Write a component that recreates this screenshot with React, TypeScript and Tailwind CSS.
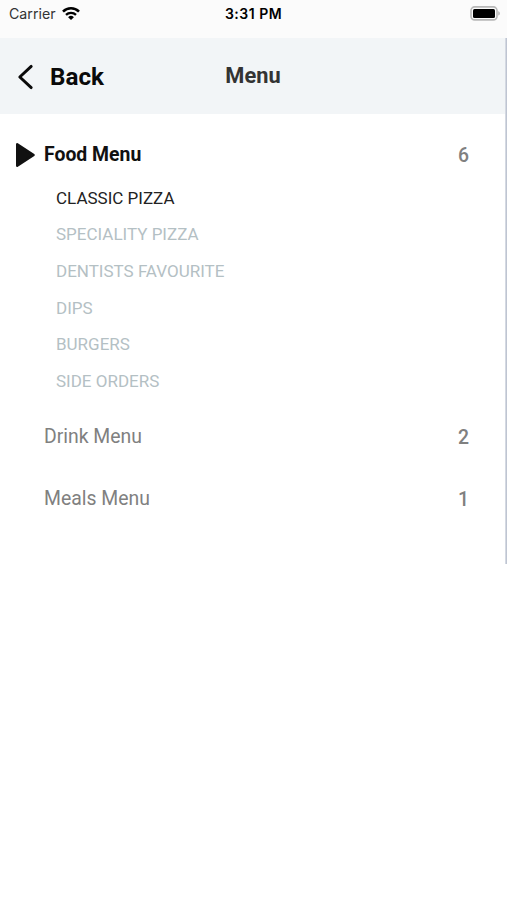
interface MenuCategory {
  id: string;
  title: string;
  count: number;
  items: string[];
}

const categories: MenuCategory[] = [
  {
    id: "food",
    title: "Food Menu",
    count: 6,
    items: [
      "Classic Pizza",
      "Speciality Pizza",
      "Dentists Favourite",
      "Dips",
      "Burgers",
      "Side Orders",
    ],
  },
  { id: "drink", title: "Drink Menu", count: 2, items: [] },
  { id: "meals", title: "Meals Menu", count: 1, items: [] },
];

function StatusBar() {
  return (
    <div className="grid h-[38px] grid-cols-3 items-start bg-[#fbfbfb] pt-[5px] pl-[7px] pr-[7px] font-['Inter',sans-serif] text-black">
      <div className="flex items-center gap-[6px] pl-[2px]">
        <span className="text-[14.2px] leading-[18px] text-[#333]">
          Carrier
        </span>
        <svg width="18" height="14" viewBox="0 0 18 14" fill="none">
          <path d="M1 4.6a11.4 11.4 0 0 1 16 0" stroke="#000" strokeWidth="2.6" />
          <path d="M4 7.9a7.1 7.1 0 0 1 10 0" stroke="#000" strokeWidth="2.3" />
          <path d="M9 13.1 6.1 10.2a4.1 4.1 0 0 1 5.8 0Z" fill="#000" />
        </svg>
      </div>
      <span className="text-center text-[14px] leading-[18px] font-semibold tracking-[0.5px]">
        3:31 PM
      </span>
      <svg
        className="mt-px justify-self-end"
        width="30"
        height="15"
        viewBox="0 0 30 15"
      >
        <rect x="1" y="0.9" width="26" height="13" rx="3.6" fill="#fbfbfb" stroke="#b8b8b8" strokeWidth="1.6" />
        <rect x="3" y="3" width="22" height="9" rx="1.5" fill="#000" />
        <path d="M28.2 5.2c1.1.4 1.7 1.2 1.7 2.2s-.6 1.8-1.7 2.2Z" fill="#b8b8b8" />
      </svg>
    </div>
  );
}

function Header() {
  return (
    <header className="grid h-[76px] grid-cols-3 items-center bg-[#f2f5f7] pl-[16px] pr-[17px]">
      <button className="flex items-center gap-[15px] pl-px pt-px text-[24.2px] leading-[30px] font-bold text-[#0a0a0a]">
        <svg width="18" height="26" viewBox="0 0 18 26" fill="none">
          <path
            d="M14.2 2.4 2.8 13l11.4 10.6"
            stroke="#0a0a0a"
            strokeWidth="2.9"
            strokeLinecap="round"
            strokeLinejoin="round"
          />
        </svg>
        Back
      </button>
      <h1 className="text-center text-[21.8px] leading-[28px] font-bold text-[#333]">
        Menu
      </h1>
    </header>
  );
}

function CategoryRow({
  category,
  active,
}: {
  category: MenuCategory;
  active: boolean;
}) {
  return (
    <div className="flex h-[50px] items-center pl-[15px] pr-[38px]">
      <div className="w-[29px] shrink-0">
        {active && (
          <svg width="21" height="26" viewBox="0 0 21 26">
            <path
              d="M2.2 2.2v21.6L18.6 13Z"
              fill="#111"
              stroke="#111"
              strokeWidth="2.4"
              strokeLinejoin="round"
            />
          </svg>
        )}
      </div>
      <span
        className={`flex-1 text-[19.4px] ${
          active ? "font-bold text-[#111]" : "text-[#808080]"
        }`}
      >
        {category.title}
      </span>
      <span className="pt-px text-[19.4px] font-medium text-[#808080]">
        {category.count}
      </span>
    </div>
  );
}

export default function App() {
  const activeId = "food";
  const activeItem = "Classic Pizza";

  return (
    <div className="h-screen overflow-hidden bg-white font-['Roboto',sans-serif]">
      <StatusBar />
      <div className="relative h-[526px]">
        <Header />
        <div className="flex flex-col gap-3 pt-[16px]">
          {categories.map((category) => (
            <section key={category.id}>
              <CategoryRow category={category} active={category.id === activeId} />
              {category.items.length > 0 && (
                <ul className="pt-[0.2px] pl-[56px]">
                  {category.items.map((item) => (
                    <li
                      key={item}
                      className={`flex h-[36.6px] items-center text-[17px] uppercase ${
                        item === activeItem ? "text-[#222]" : "text-[#b4c0c4]"
                      }`}
                    >
                      {item}
                    </li>
                  ))}
                </ul>
              )}
            </section>
          ))}
        </div>
        {/* Right edge of the drawer */}
        <div className="absolute inset-y-0 right-0 w-[2px] bg-linear-to-r from-[#dfe3ea] to-[#b4bbca]" />
      </div>
    </div>
  );
}
